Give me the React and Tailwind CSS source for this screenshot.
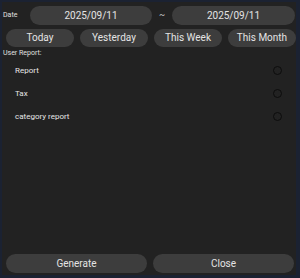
import React from "react";

const Pill = ({ children, className = "" }) => (
  <div
    className={`flex items-center justify-center rounded-full bg-[#3d3d3d] text-[#e4e4e4] text-[10px] leading-none ${className}`}
  >
    {children}
  </div>
);

const reports = ["Report", "Tax", "category report"];

export default function App() {
  return (
    <div className="w-[300px] h-[278px] bg-[#1b2232] pt-[2px] pl-[2px] font-['Roboto',sans-serif] overflow-hidden">
      {/* Dialog */}
      <div className="w-[294px] h-[273px] bg-[#222222] flex flex-col">
        {/* Date range */}
        <div className="flex items-center h-[19px] mt-[4px]">
          <span className="w-[28px] pl-[1px] text-[7px] text-[#e0e0e0]">Date</span>
          <Pill className="w-[122px] h-[19px]">2025/09/11</Pill>
          <span className="w-[20px] text-center text-[9px] text-[#d0d0d0]">~</span>
          <Pill className="w-[123px] h-[19px]">2025/09/11</Pill>
        </div>

        {/* Quick ranges */}
        <div className="flex gap-[6px] pl-[4px] mt-[4px]">
          <Pill className="w-[68px] h-[18px]">Today</Pill>
          <Pill className="w-[68px] h-[18px]">Yesterday</Pill>
          <Pill className="w-[68px] h-[18px]">This Week</Pill>
          <Pill className="w-[68px] h-[18px]">This Month</Pill>
        </div>

        <div className="pl-[1px] mt-[2px] text-[7px] leading-[9px] text-[#e0e0e0]">User Report:</div>

        {/* Report list */}
        <div className="flex flex-col mt-[1px]">
          {reports.map((r) => (
            <div key={r} className="flex items-center justify-between h-[23px] pl-[13px] pr-[14px]">
              <span className="text-[8px] text-[#e6e6e6]">{r}</span>
              <span className="w-[9px] h-[9px] rounded-full border border-[#0c0c0c]" />
            </div>
          ))}
        </div>

        <div className="flex-1" />

        {/* Actions */}
        <div className="flex gap-[6px] pl-[4px] mb-[2px]">
          <Pill className="w-[141px] h-[19px]">Generate</Pill>
          <Pill className="w-[141px] h-[19px]">Close</Pill>
        </div>
      </div>
    </div>
  );
}
